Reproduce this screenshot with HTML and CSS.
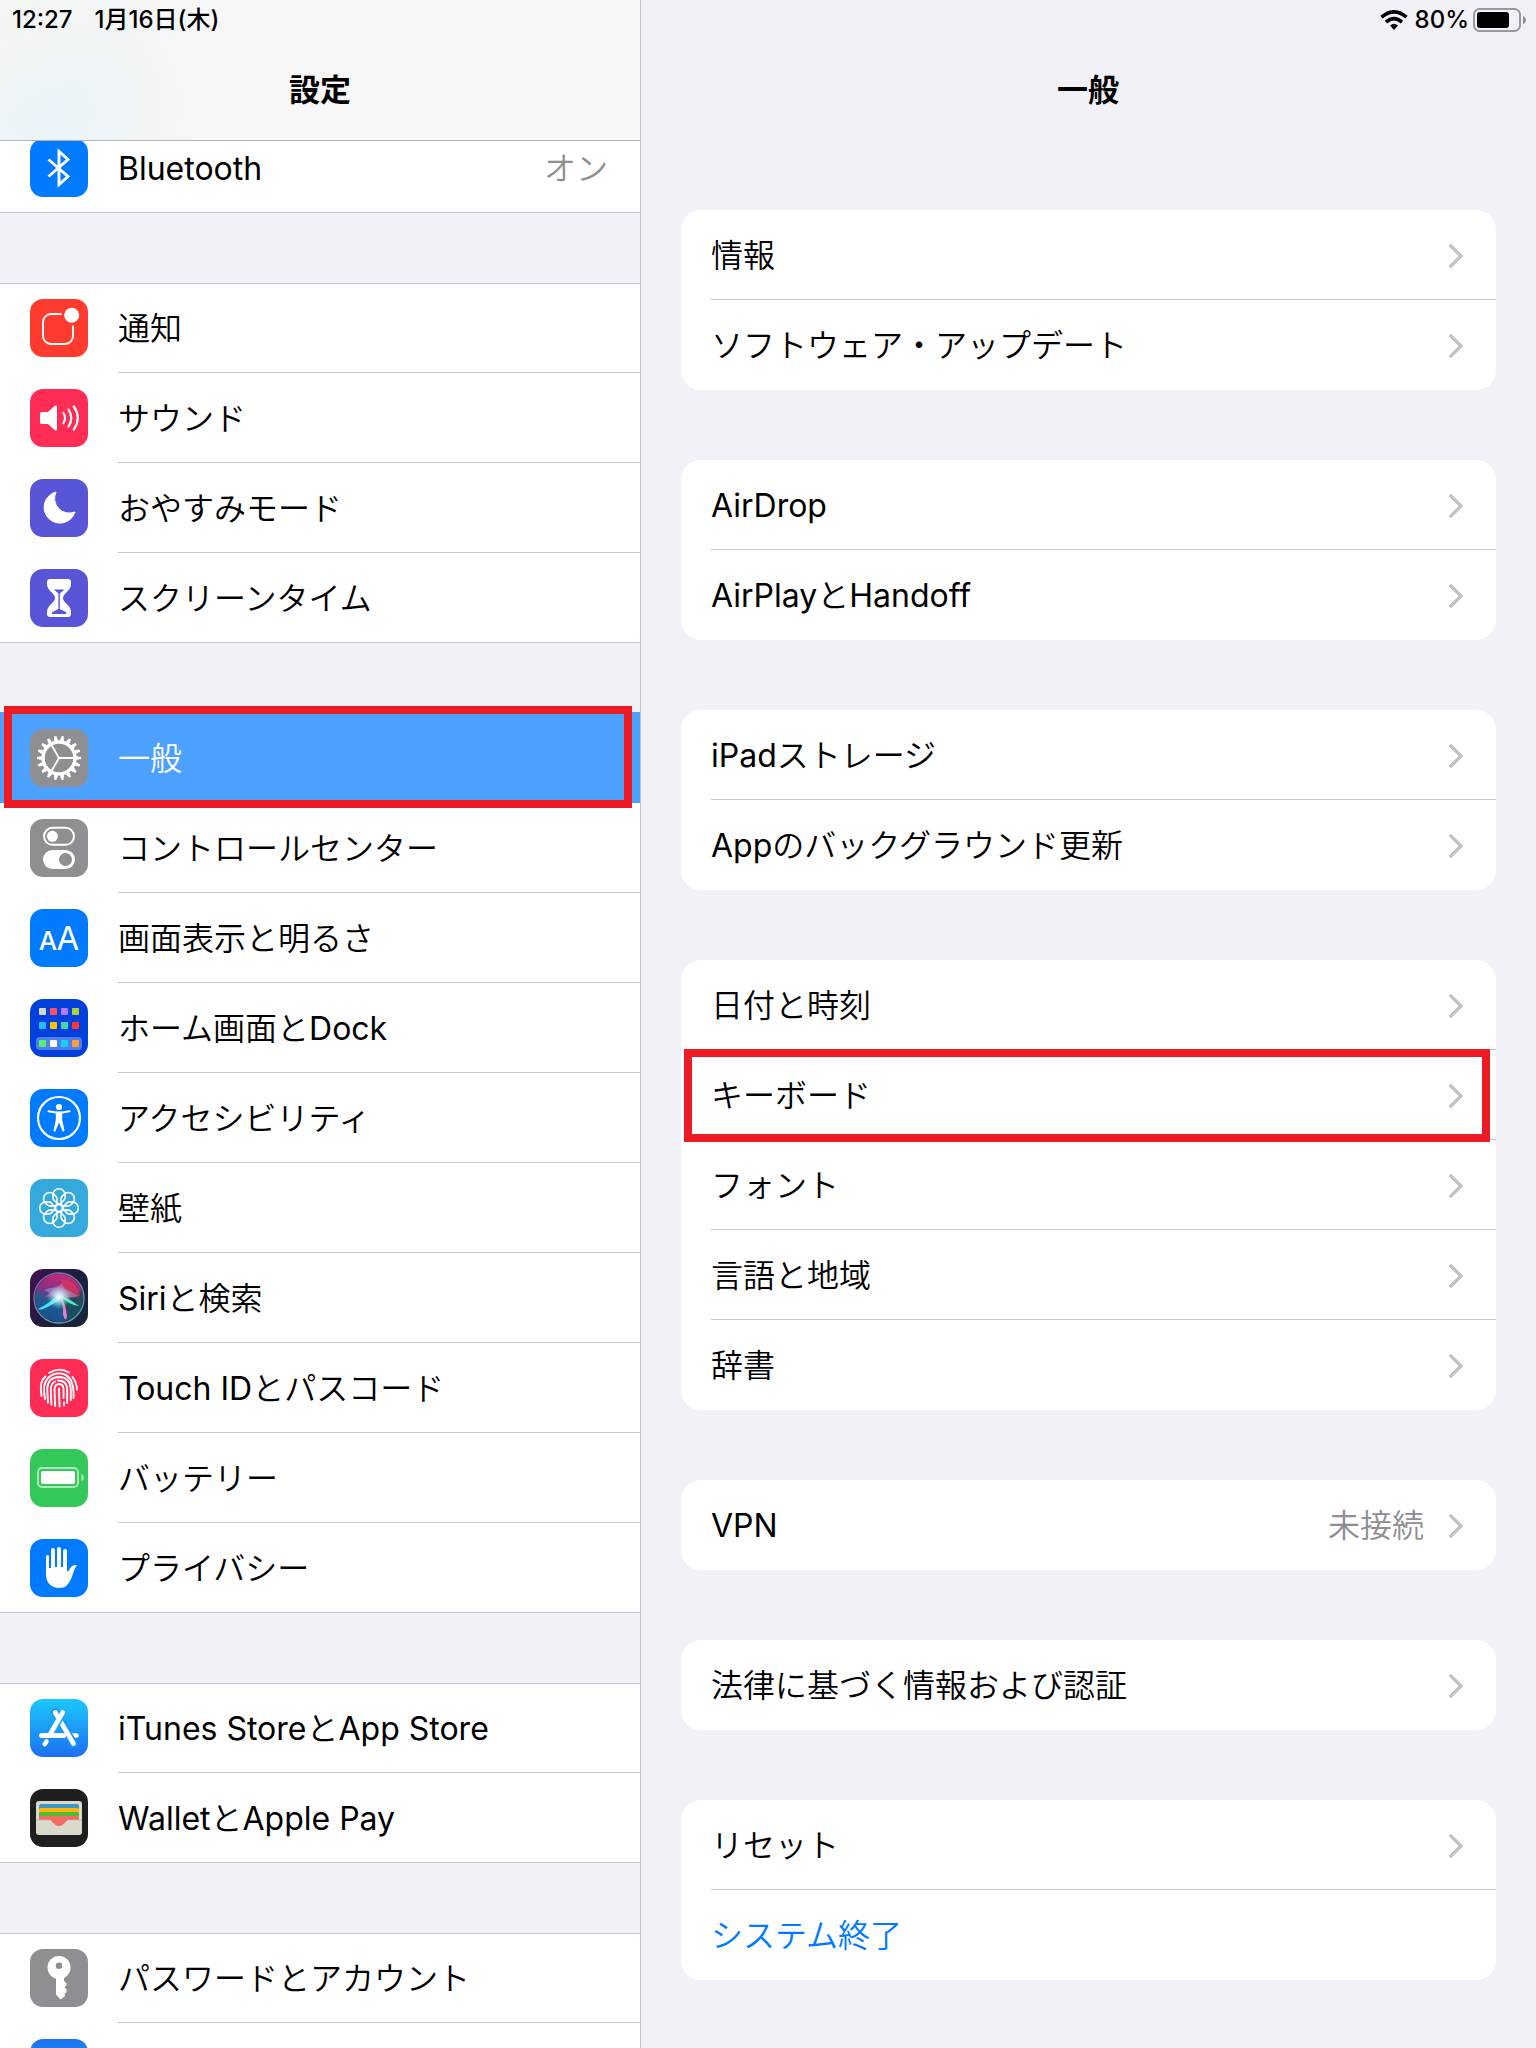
FILE: index.html
```html
<!DOCTYPE html>
<html lang="ja">
<head>
<meta charset="utf-8">
<meta name="viewport" content="width=device-width, initial-scale=1">
<title>設定</title>
<link rel="stylesheet" href="styles.css">
</head>
<body>
<div class="app">
  <nav class="sidebar" aria-label="設定">
    <header class="sidebar-header">
      <div class="status"><span>12:27</span><span>1月16日(木)</span></div>
      <h1 class="title">設定</h1>
    </header>
    <div class="sidebar-list">
      <ul class="group">
        <li><a class="row" href="#">
          <svg class="icon blue" viewBox="0 0 58 58"><path d="M18.500 20.500L38 37.500L29 45.500V12.500L38 20.500L18.500 37.500" fill="none" stroke="#fff" stroke-width="2.900"/></svg>
          <span class="cell">Bluetooth<span class="value">オン</span></span></a></li>
      </ul>
      <ul class="group">
        <li><a class="row" href="#">
          <svg class="icon red" viewBox="0 0 58 58"><path d="M31.500 15H21a8 8 0 0 0-8 8v14a8 8 0 0 0 8 8h14a8 8 0 0 0 8-8V26.500" fill="none" stroke="#fff" stroke-width="1.900"/><circle cx="41.700" cy="16.300" r="7.500" fill="#fff"/></svg>
          <span class="cell">通知</span></a></li>
        <li><a class="row" href="#">
          <svg class="icon pink" viewBox="0 0 58 58"><path d="M12 23h6l6.500-6q2.500-1.500 2.500 1v22q0 2.500-2.500 1L18 35h-6q-2 0-2-2v-8q0-2 2-2z" fill="#fff"/><path d="M33.500 24q3 5 0 10M38.500 20.500q5.500 8.500 0 17M43.800 17.500q8 11.500 0 23" fill="none" stroke="#fff" stroke-width="2.200" stroke-linecap="round"/></svg>
          <span class="cell">サウンド</span></a></li>
        <li><a class="row" href="#">
          <svg class="icon indigo" viewBox="0 0 58 58"><path d="M26 13A15.800 15.800 0 1 0 45 33A14.800 14.800 0 0 1 26 13z" fill="#fff" stroke="#fff" stroke-linejoin="round"/></svg>
          <span class="cell">おやすみモード</span></a></li>
        <li><a class="row" href="#">
          <svg class="icon indigo" viewBox="0 0 58 58"><path d="M20 10h18q3 0 3 3v2c0 7-8 9-8 14s8 7 8 14v2q0 3-3 3H20q-3 0-3-3v-2c0-7 8-9 8-14s-8-7-8-14v-2q0-3 3-3z" fill="#fff"/><path d="M24 20.500h10.500L29.800 24.500V40l6.500 3.200V45H22v-1.800l6.400-3.200V24.500z" fill="#5856d6"/></svg>
          <span class="cell">スクリーンタイム</span></a></li>
      </ul>
      <ul class="group">
        <li><a class="row selected marked" href="#" aria-current="page">
          <svg class="icon gray" viewBox="0 0 58 58"><g fill="none" stroke="#fff"><circle cx="29" cy="29" r="16" stroke-width="3.400"/><circle cx="29" cy="29" r="18.500" stroke-width="3" pathLength="36" stroke-dasharray="1.100 .9" stroke-dashoffset=".55"/><circle cx="29" cy="29" r="20.700" stroke-width="2.800" pathLength="36" stroke-dasharray=".7 1.300" stroke-dashoffset=".35"/><path d="M29 29H44.500M29 29L21.200 15.600M29 29L21.200 42.400" stroke-width="1.900"/></g></svg>
          <span class="cell">一般</span></a></li>
        <li><a class="row" href="#">
          <svg class="icon gray" viewBox="0 0 58 58"><rect x="14" y="8.800" width="30" height="17" rx="8.500" fill="none" stroke="#fff" stroke-width="1.900"/><circle cx="22.400" cy="17.300" r="5.500" fill="#fff"/><rect x="13" y="31" width="32" height="19" rx="9.500" fill="#fff"/><circle cx="35.500" cy="40.500" r="6.500" fill="#8e8e93"/></svg>
          <span class="cell">コントロールセンター</span></a></li>
        <li><a class="row" href="#">
          <svg class="icon blue" viewBox="0 0 58 58"><g fill="#fff" font-family="Inter, sans-serif" font-weight="500" text-anchor="middle"><text x="18" y="41" font-size="26">A</text><text x="38" y="41" font-size="33" font-weight="400">A</text></g></svg>
          <span class="cell">画面表示と明るさ</span></a></li>
        <li><a class="row" href="#">
          <svg class="icon navy" viewBox="0 0 58 58"><rect x="6" y="38" width="46" height="13" rx="4" fill="#4f80ea"/><g><rect x="9" y="9" width="7" height="7" rx="1" fill="#d9d4cf"/><rect x="20" y="9" width="7" height="7" rx="1" fill="#ff4f64"/><rect x="31" y="9" width="7" height="7" rx="1" fill="#b873ff"/><rect x="42" y="9" width="7" height="7" rx="1" fill="#b2cf36"/><rect x="9" y="23" width="7" height="7" rx="1" fill="#1ebeff"/><rect x="20" y="23" width="7" height="7" rx="1" fill="#ffc400"/><rect x="31" y="23" width="7" height="7" rx="1" fill="#41d9a3"/><rect x="42" y="23" width="7" height="7" rx="1" fill="#ff3832"/><rect x="9" y="41" width="7" height="7" rx="1" fill="#56f26e"/><rect x="20" y="41" width="7" height="7" rx="1" fill="#fff"/><rect x="31" y="41" width="7" height="7" rx="1" fill="#17cffd"/><rect x="42" y="41" width="7" height="7" rx="1" fill="#ff9e3f"/></g></svg>
          <span class="cell">ホーム画面とDock</span></a></li>
        <li><a class="row" href="#">
          <svg class="icon blue" viewBox="0 0 58 58"><circle cx="29" cy="29" r="21" fill="none" stroke="#fff" stroke-width="2.200"/><circle cx="29" cy="18" r="3.100" fill="#fff"/><path d="M18.500 22.200L26 23.600h6L39.500 22.200" fill="none" stroke="#fff" stroke-width="2" stroke-linecap="round"/><path d="M25.800 22.800h6.400v8.200l2.300 10.500q0 1.300-1.800 1L29 33.500l-3.700 9q-1.800.3-1.800-1l2.300-10.500z" fill="#fff"/></svg>
          <span class="cell">アクセシビリティ</span></a></li>
        <li><a class="row" href="#">
          <svg class="icon cyan" viewBox="0 0 58 58"><defs><path id="petal" d="M29 25.400L24.200 21.500Q22.900 20 22.900 18V15.800a6.100 6.100 0 0 1 12.200 0V18Q35.100 20 33.800 21.500z"/></defs><g fill="none" stroke="#fff" stroke-width="1.600"><use href="#petal"/><use href="#petal" transform="rotate(45 29 29)"/><use href="#petal" transform="rotate(90 29 29)"/><use href="#petal" transform="rotate(135 29 29)"/><use href="#petal" transform="rotate(180 29 29)"/><use href="#petal" transform="rotate(225 29 29)"/><use href="#petal" transform="rotate(270 29 29)"/><use href="#petal" transform="rotate(315 29 29)"/><circle cx="29" cy="29" r="3.600"/></g></svg>
          <span class="cell">壁紙</span></a></li>
        <li><a class="row" href="#">
          <svg class="icon siri" viewBox="0 0 58 58"><defs><linearGradient id="siri-orb" x1=".6" y1="0" x2=".4" y2="1"><stop offset="0" stop-color="#c62a78"/><stop offset=".35" stop-color="#8b2f82"/><stop offset=".6" stop-color="#1f5c8e"/><stop offset="1" stop-color="#17508f"/></linearGradient><linearGradient id="siri-rim" x1="0" y1="0" x2="1" y2="1"><stop offset="0" stop-color="#8c5aa8"/><stop offset=".5" stop-color="#6f93a8"/><stop offset="1" stop-color="#4fae8e"/></linearGradient><radialGradient id="siri-core"><stop offset="0" stop-color="#fff"/><stop offset=".35" stop-color="#c8f4ff" stop-opacity=".8"/><stop offset="1" stop-color="#6fd" stop-opacity="0"/></radialGradient></defs><circle cx="29" cy="29" r="24" fill="url(#siri-orb)"/><path d="M31 29L52 22a24 24 0 0 1-14 29z" fill="#1b4a58" opacity=".8"/><path d="M32 11Q46 10 50 27Q40 30 30 27z" fill="#dc355c" opacity=".75"/><path d="M14 21Q28 14 48 27Q32 32 14 21z" fill="#8fa4d8" opacity=".5"/><path d="M32 14L39 30L29 27L15 28z" fill="#d45ab8" opacity=".7"/><path d="M29 25Q20 34 8 40Q11 43 31 30z" fill="#49e3ff"/><path d="M30 26Q38 36 49 37Q40 30 30 26z" fill="#53f0b8"/><path d="M29 26Q34 36 33 45Q35 54 37 48Q36 34 30 26z" fill="#f07cc4"/><circle cx="29" cy="28" r="12" fill="url(#siri-core)"/><circle cx="29" cy="29" r="25" fill="none" stroke="url(#siri-rim)" stroke-width="1.300"/></svg>
          <span class="cell">Siriと検索</span></a></li>
        <li><a class="row" href="#">
          <svg class="icon pink" viewBox="0 0 58 58"><g fill="none" stroke="#fff" stroke-width="1.900" stroke-linecap="round"><path d="M19 14Q29 7.500 39 13.500M42.500 18Q46.500 23 47 30.500M11.500 37Q9 22 15.500 17.500"/><path d="M15 40Q12 25 18 19Q23 14 29 14.500Q36 14 40.500 20.500Q44 26 43.500 39"/><path d="M18 43.500Q17.500 36 17.200 30Q17.500 18.500 29 18Q40.500 18.500 40.800 30V41"/><path d="M21.500 45.500Q21 38 20.800 30Q21.500 24 25 22.500M28 21.500Q36.800 21.500 37.200 30V44"/><path d="M25.200 47Q24.700 38 24.500 30Q25 25.200 29 25Q33.300 25.200 33.600 30V39M34 43.500v3"/><path d="M29.600 47.500Q29.200 40 29 29.500"/></g></svg>
          <span class="cell">Touch IDとパスコード</span></a></li>
        <li><a class="row" href="#">
          <svg class="icon green" viewBox="0 0 58 58"><rect x="8" y="19" width="40" height="19" rx="4" fill="none" stroke="#fff" stroke-width="1.900" opacity=".6"/><rect x="11" y="22" width="34" height="13" rx="2" fill="#fff"/><path d="M51.300 25v7q2.700-1 2.700-3.500t-2.700-3.500z" fill="#fff" opacity=".6"/></svg>
          <span class="cell">バッテリー</span></a></li>
        <li><a class="row" href="#">
          <svg class="icon blue" viewBox="0 0 58 58"><path d="M16 17.500q0-1.500 1.500-1.500t1.500 1.500V29h2V11q0-2 2-2t2 2v17h2V10q0-2 2-2t2 2v18h2V12q0-2 2-2t2 2v20h1.500c2.500-5 5-7 8.500-5.500c-4 5-4 10-6.500 14.500S36 49 29 49S16 44 16 36z" fill="#fff"/></svg>
          <span class="cell">プライバシー</span></a></li>
      </ul>
      <ul class="group">
        <li><a class="row" href="#">
          <svg class="icon store" viewBox="0 0 58 58"><g fill="none" stroke="#fff" stroke-width="4.600" stroke-linecap="round"><path d="M11.500 36.500H46.500"/><path d="M25.300 13.500L43.500 44.500" stroke="#1f93f8" stroke-width="8"/><path d="M25.300 13.500L43.500 44.500"/><path d="M33 13.500L22 32" stroke="#1fa4f9" stroke-width="7.500" stroke-linecap="butt"/><path d="M25.300 13.500L28 18M32.700 13.500L20 35.500M16.500 42.500L14.800 45"/></g><path d="M11.500 36.500H34" stroke="#fff" stroke-width="4.600" stroke-linecap="round"/></svg>
          <span class="cell">iTunes StoreとApp Store</span></a></li>
        <li><a class="row" href="#">
          <svg class="icon black" viewBox="0 0 58 58"><rect x="6" y="12" width="46" height="34" rx="3" fill="#dbd8cc"/><path d="M9 20v-3q0-2 2-2h36q2 0 2 2v3z" fill="#3f97c8"/><path d="M9 24v-3q0-2 2-2h36q2 0 2 2v3z" fill="#ffb50a"/><path d="M9 28v-3q0-2 2-2h36q2 0 2 2v3z" fill="#4fba34"/><path d="M9 31v-2q0-2 2-2h36q2 0 2 2v2H38.500c-3 0-4 6-9.500 6s-6.500-6-9.500-6z" fill="#f26d5f"/><path d="M6 31H19.500M38.500 31H52" stroke="#bbb8ad" stroke-width=".7"/></svg>
          <span class="cell">WalletとApple Pay</span></a></li>
      </ul>
      <ul class="group">
        <li><a class="row" href="#">
          <svg class="icon gray" viewBox="0 0 58 58"><circle cx="29" cy="18.500" r="11.500" fill="#fff"/><path d="M26 27h8v5l3 3-2.500 3.500 2 1.500v3l-2 2 .5 2-4.500 3.500-4.500-5z" fill="#fff"/><circle cx="29" cy="16.800" r="3.200" fill="#8e8e93"/></svg>
          <span class="cell">パスワードとアカウント</span></a></li>
        <li><div class="row">
          <svg class="icon mail" viewBox="0 0 58 58"></svg>
          <span class="cell"></span></div></li>
      </ul>
    </div>
  </nav>

  <main class="detail">
    <header class="detail-header">
      <div class="status status-right">
        <svg class="wifi" viewBox="0 0 28 20"><g fill="none" stroke="#000" stroke-width="3.600"><path d="M1.500 7.200Q14-3.500 26.500 7.200"/><path d="M6 12.200Q14 5.200 22 12.200"/></g><path d="M14 20l-4-4.500q4-3.300 8 0z"/></svg>
        <span>80%</span>
        <svg class="battery" viewBox="0 0 54 24"><rect x="1" y="1" width="46" height="22" rx="5.500" fill="none" stroke="#99999d" stroke-width="2"/><rect x="4" y="4" width="32" height="16" rx="3"/><path d="M50 8v8q3-1 3-4t-3-4z" fill="#8e8e93"/></svg>
      </div>
      <h2 class="title">一般</h2>
    </header>
    <div class="cards">
      <ul class="card">
        <li><a class="item" href="#"><span class="cell">情報<i class="chevron"></i></span></a></li>
        <li><a class="item" href="#"><span class="cell">ソフトウェア・アップデート<i class="chevron"></i></span></a></li>
      </ul>
      <ul class="card">
        <li><a class="item" href="#"><span class="cell">AirDrop<i class="chevron"></i></span></a></li>
        <li><a class="item" href="#"><span class="cell">AirPlayとHandoff<i class="chevron"></i></span></a></li>
      </ul>
      <ul class="card">
        <li><a class="item" href="#"><span class="cell">iPadストレージ<i class="chevron"></i></span></a></li>
        <li><a class="item" href="#"><span class="cell">Appのバックグラウンド更新<i class="chevron"></i></span></a></li>
      </ul>
      <ul class="card">
        <li><a class="item" href="#"><span class="cell">日付と時刻<i class="chevron"></i></span></a></li>
        <li><a class="item marked" href="#"><span class="cell">キーボード<i class="chevron"></i></span></a></li>
        <li><a class="item" href="#"><span class="cell">フォント<i class="chevron"></i></span></a></li>
        <li><a class="item" href="#"><span class="cell">言語と地域<i class="chevron"></i></span></a></li>
        <li><a class="item" href="#"><span class="cell">辞書<i class="chevron"></i></span></a></li>
      </ul>
      <ul class="card">
        <li><a class="item" href="#"><span class="cell">VPN<span class="value">未接続</span><i class="chevron"></i></span></a></li>
      </ul>
      <ul class="card">
        <li><a class="item" href="#"><span class="cell">法律に基づく情報および認証<i class="chevron"></i></span></a></li>
      </ul>
      <ul class="card">
        <li><a class="item" href="#"><span class="cell">リセット<i class="chevron"></i></span></a></li>
        <li><button class="item action" type="button"><span class="cell">システム終了</span></button></li>
      </ul>
    </div>
  </main>
</div>
</body>
</html>
```
FILE: styles.css
```css
:root {
  --line: #c6c6c8;
  --page: #f2f1f7;
  --mark: #ed1c24;
}

* {
  box-sizing: border-box;
}

body {
  margin: 0;
  background: var(--page);
  color: #000;
  font-family: Inter, "Noto Sans CJK JP DemiLight", "Noto Sans CJK JP", sans-serif;
  font-size: 32px;
  line-height: 40px;
}

ul {
  margin: 0;
  padding: 0;
  list-style: none;
}

a {
  color: inherit;
  text-decoration: none;
}

.app {
  display: grid;
  grid-template-columns: 5fr 7fr;
  height: 100vh;
  overflow: hidden;
}

/* Shared header parts */

.status {
  display: flex;
  align-items: center;
  gap: 22px;
  height: 40px;
  padding: 0 12px;
  font-size: 24px;
  font-family: Inter, "Noto Sans CJK JP", sans-serif;
  font-weight: 500;
  white-space: nowrap;
}

.status-right {
  justify-content: flex-end;
  gap: 4px;
  padding: 0 9px;
}

.title {
  margin: 0;
  padding-top: 30px;
  font-family: Inter, "Noto Sans CJK JP", sans-serif;
  font-size: 31px;
  font-weight: 700;
  line-height: 40px;
  text-align: center;
}

.wifi {
  width: 28px;
  height: 20px;
  margin-right: 3px;
}

.battery {
  width: 54px;
  height: 24px;
}

/* Sidebar */

.sidebar {
  min-width: 0;
  margin-right: -1px;
  border-right: 1px solid var(--line);
  overflow: hidden;
}

.sidebar-header {
  position: relative;
  z-index: 1;
  height: 141px;
  border-bottom: 1px solid #b2b2b4;
  background:
    radial-gradient(circle at 0 0, #f3f7f2 0, transparent 120px),
    radial-gradient(circle at 50px 110px, #eaf3f8 0, #f7f7f7 170px);
}

.sidebar-list {
  display: flex;
  flex-direction: column;
  gap: 70px;
  margin-top: -18px;
}

.group {
  background: #fff;
  box-shadow: inset 0 1px var(--line), inset 0 -1px var(--line);
}

.row {
  position: relative;
  display: flex;
  align-items: center;
  gap: 30px;
  height: 90px;
  padding-left: 30px;
}

.cell {
  display: flex;
  flex: 1;
  align-items: center;
  align-self: stretch;
  padding: 3px 32px 0 0;
  border-bottom: 1px solid var(--line);
  white-space: nowrap;
}

.value {
  margin-left: auto;
  color: #8e8e93;
}

.selected {
  background: #4ca1ff;
  box-shadow: 0 -1px #4ca1ff;
  color: #fff;
}

.selected .cell {
  border-color: transparent;
}

.icon {
  flex: none;
  width: 58px;
  height: 58px;
  border-radius: 13px;
}

.blue { background: #007aff; }
.red { background: #ff3b30; }
.pink { background: #ff2d55; }
.indigo { background: #5856d6; }
.gray { background: #8e8e93; }
.navy { background: #0040dd; }
.cyan { background: #34aadc; }
.green { background: #34c759; }
.black { background: #1f1f1f; }
.siri { background: linear-gradient(120deg, #40104f, #1f1c40 50%, #14283c); }
.store { background: linear-gradient(#1bc8fc, #1d6ff2); }
.mail { background: linear-gradient(#1d70f2, #1bc8fc); }

/* Outline laid over a row to point it out */

.marked::after {
  content: "";
  position: absolute;
  z-index: 1;
  border: 8px solid var(--mark);
}

.row.marked::after {
  inset: -7px 8px -5px 4px;
}

.item.marked::after {
  inset: -1px 6px -2px 3px;
}

/* Detail pane */

.detail {
  min-width: 0;
}

.detail-header {
  height: 210px;
}

.cards {
  display: flex;
  flex-direction: column;
  gap: 70px;
  padding: 0 40px 70px 41px;
}

.card {
  border-radius: 20px;
  background: #fff;
}

.item {
  position: relative;
  display: flex;
  width: 100%;
  height: 90px;
  padding: 0 0 0 30px;
}

.card li:last-child .cell {
  border-color: transparent;
}

.chevron {
  width: 18px;
  height: 18px;
  margin: 0 4px 0 auto;
  border: solid #c4c4c6;
  border-width: 4px 4px 0 0;
  border-radius: 2px;
  transform: rotate(45deg);
}

.value + .chevron {
  margin-left: 18px;
}

.action {
  border: 0;
  background: none;
  color: #007aff;
  font: inherit;
  text-align: left;
}
```
